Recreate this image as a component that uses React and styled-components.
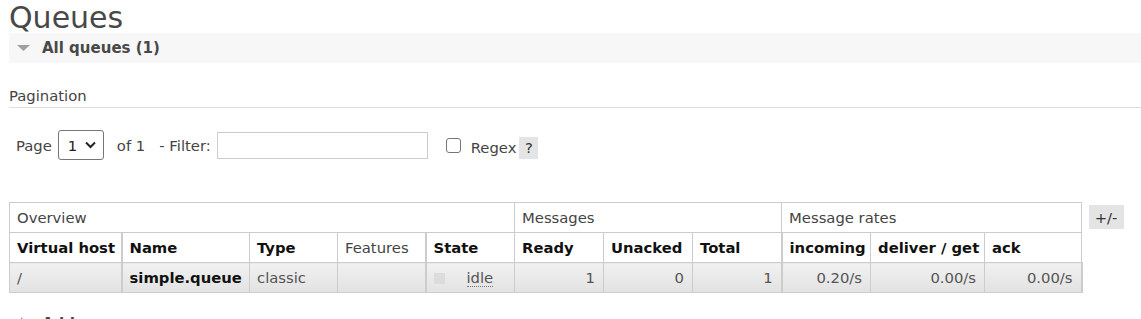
import React from 'react'
import styled, { createGlobalStyle } from 'styled-components'

const GlobalStyle = createGlobalStyle`
  html, body {
    margin: 0;
    padding: 0;
    background: #fff;
    font-family: "DejaVu Sans", Verdana, sans-serif;
    font-size: 14.8px;
    color: #444;
  }
`

const Main = styled.div`
  padding-left: 9px;
`

const Title = styled.h1`
  margin: 0;
  padding-top: 3px;
  height: 30px;
  line-height: 30px;
  font-size: 30px;
  font-weight: normal;
  color: #484848;
`

const SectionBar = styled.div`
  display: flex;
  align-items: center;
  height: 30px;
  padding-left: 8px;
  gap: 11px;
  background: ${p => (p.$open ? '#f7f7f7' : 'transparent')};
  font-size: 15px;
  font-weight: bold;
  color: #484848;
  margin-top: ${p => p.$top || 0}px;
`

const Arrow = ({ open }) => (
  <svg width="14" height="14" viewBox="0 0 14 14">
    {open ? (
      <polygon points="0,4 13,4 6.5,10" fill="#a0a0a0" />
    ) : (
      <polygon points="4,0 11,6.5 4,13" fill="#a0a0a0" />
    )}
  </svg>
)

const SubHeading = styled.div`
  margin-top: 24px;
  height: 17px;
  line-height: 17px;
  padding-bottom: 3px;
  border-bottom: 1px solid #ddd;
`

const PagerRow = styled.div`
  display: flex;
  align-items: center;
  margin-top: 22px;
  padding-left: 7px;
  height: 30px;
`

const Label = styled.span`
  margin-right: ${p => p.$mr || 0}px;
  white-space: pre;
`

const SelectWrap = styled.span`
  position: relative;
  display: inline-block;
  margin-left: 6px;
  margin-right: 13px;
`

const Select = styled.select`
  appearance: none;
  box-sizing: border-box;
  width: 46px;
  height: 30px;
  padding: 0 0 0 9px;
  border: 1px solid #767676;
  border-radius: 3px;
  background: #fff;
  font-family: inherit;
  font-size: 14.8px;
  color: #222;
`

const Chevron = styled.svg`
  position: absolute;
  right: 8px;
  top: 11px;
  pointer-events: none;
`

const FilterInput = styled.input`
  box-sizing: border-box;
  width: 211px;
  height: 27px;
  border: 1px solid #ccc;
  margin: 0 18px 0 0;
  padding: 0 4px;
  font-family: inherit;
  font-size: 14.8px;
`

const RegexGroup = styled.span`
  display: flex;
  align-items: center;
  margin-top: 5px;
`

const Check = styled.input`
  appearance: none;
  box-sizing: border-box;
  width: 15px;
  height: 15px;
  margin: -5px 10px 0 0;
  border: 1px solid #767676;
  border-radius: 3px;
  background: #fff;
`

const Help = styled.span`
  display: inline-flex;
  align-items: center;
  justify-content: center;
  width: 19px;
  height: 22px;
  margin-left: 3px;
  background: #e4e4e4;
  color: #333;
`

const TableRow = styled.div`
  display: flex;
  align-items: flex-start;
  margin-top: 42px;
`

const Table = styled.table`
  table-layout: fixed;
  width: 1072px;
  border-collapse: collapse;
  border: 1px solid #ccc;
`

const Th = styled.th`
  height: 29px;
  padding: 0 0 0 7px;
  text-align: left;
  white-space: nowrap;
  overflow: hidden;
  border: 1px solid #ccc;
  border-right: ${p => (p.$sep ? '2px' : '1px')} solid #ccc;
  font-weight: ${p => (p.$group ? 'normal' : 'bold')};
  color: ${p => (p.$group ? '#444' : '#111')};
  background: #fff;
`

const Td = styled.td`
  height: 29px;
  padding: 0 8px 0 7px;
  white-space: nowrap;
  overflow: hidden;
  border: 1px solid #ccc;
  border-right: ${p => (p.$sep ? '2px' : '1px')} solid #ccc;
  text-align: ${p => (p.$num ? 'right' : 'left')};
  font-weight: ${p => (p.$bold ? 'bold' : 'normal')};
  color: ${p => (p.$bold ? '#111' : '#555')};
  background: linear-gradient(#f1f1f1, #e2e2e2);
`

const StateBox = styled.span`
  display: inline-block;
  width: 11px;
  height: 11px;
  background: #dcdcdc;
  vertical-align: -1px;
  margin-right: 22px;
`

const Abbr = styled.abbr`
  text-decoration: none;
  border-bottom: 1px dotted #777;
  color: #555;
`

const Toggle = styled.span`
  display: inline-flex;
  align-items: center;
  justify-content: center;
  width: 35px;
  height: 24px;
  margin: 3px 0 0 6px;
  background: #e4e4e4;
  color: #333;
`

const widths = [112, 128, 88, 88, 89, 89, 89, 89, 89, 114, 97]

const columns = [
  { label: 'Virtual host', sep: true },
  { label: 'Name' },
  { label: 'Type' },
  { label: 'Features', plain: true, sep: true },
  { label: 'State' },
  { label: 'Ready' },
  { label: 'Unacked' },
  { label: 'Total', sep: true },
  { label: 'incoming' },
  { label: 'deliver / get' },
  { label: 'ack' }
]

const queues = [
  {
    vhost: '/',
    name: 'simple.queue',
    type: 'classic',
    state: 'idle',
    ready: 1,
    unacked: 0,
    total: 1,
    incoming: '0.20/s',
    deliver: '0.00/s',
    ack: '0.00/s'
  }
]

export default function App() {
  return (
    <>
      <GlobalStyle />
      <Main>
        <Title>Queues</Title>
        <SectionBar $open>
          <Arrow open />
          <span>All queues (1)</span>
        </SectionBar>

        <SubHeading>Pagination</SubHeading>
        <PagerRow>
          <Label>Page</Label>
          <SelectWrap>
            <Select defaultValue="1">
              <option value="1">1</option>
            </Select>
            <Chevron width="11" height="8" viewBox="0 0 11 8">
              <polyline points="1,1.5 5.5,6 10,1.5" fill="none" stroke="#222" strokeWidth="2" />
            </Chevron>
          </SelectWrap>
          <Label $mr={6}>{'of 1   - Filter:'}</Label>
          <FilterInput type="text" />
          <RegexGroup>
            <Check type="checkbox" />
            <Label>Regex</Label>
            <Help>?</Help>
          </RegexGroup>
        </PagerRow>

        <TableRow>
          <Table>
            <colgroup>
              {widths.map((w, i) => (
                <col key={i} style={{ width: w }} />
              ))}
            </colgroup>
            <thead>
              <tr>
                <Th $group colSpan={5}>Overview</Th>
                <Th $group colSpan={3}>Messages</Th>
                <Th $group colSpan={3}>Message rates</Th>
              </tr>
              <tr>
                {columns.map(c => (
                  <Th key={c.label} $group={c.plain} $sep={c.sep}>
                    {c.label}
                  </Th>
                ))}
              </tr>
            </thead>
            <tbody>
              {queues.map(q => (
                <tr key={q.name}>
                  <Td $sep>{q.vhost}</Td>
                  <Td $bold>{q.name}</Td>
                  <Td>{q.type}</Td>
                  <Td $sep></Td>
                  <Td>
                    <StateBox />
                    <Abbr title="Idle since">{q.state}</Abbr>
                  </Td>
                  <Td $num>{q.ready}</Td>
                  <Td $num>{q.unacked}</Td>
                  <Td $num $sep>{q.total}</Td>
                  <Td $num>{q.incoming}</Td>
                  <Td $num>{q.deliver}</Td>
                  <Td $num $sep>{q.ack}</Td>
                </tr>
              ))}
            </tbody>
          </Table>
          <Toggle>+/-</Toggle>
        </TableRow>

        <SectionBar $top={16}>
          <Arrow />
          <span>Add a new queue</span>
        </SectionBar>
      </Main>
    </>
  )
}
